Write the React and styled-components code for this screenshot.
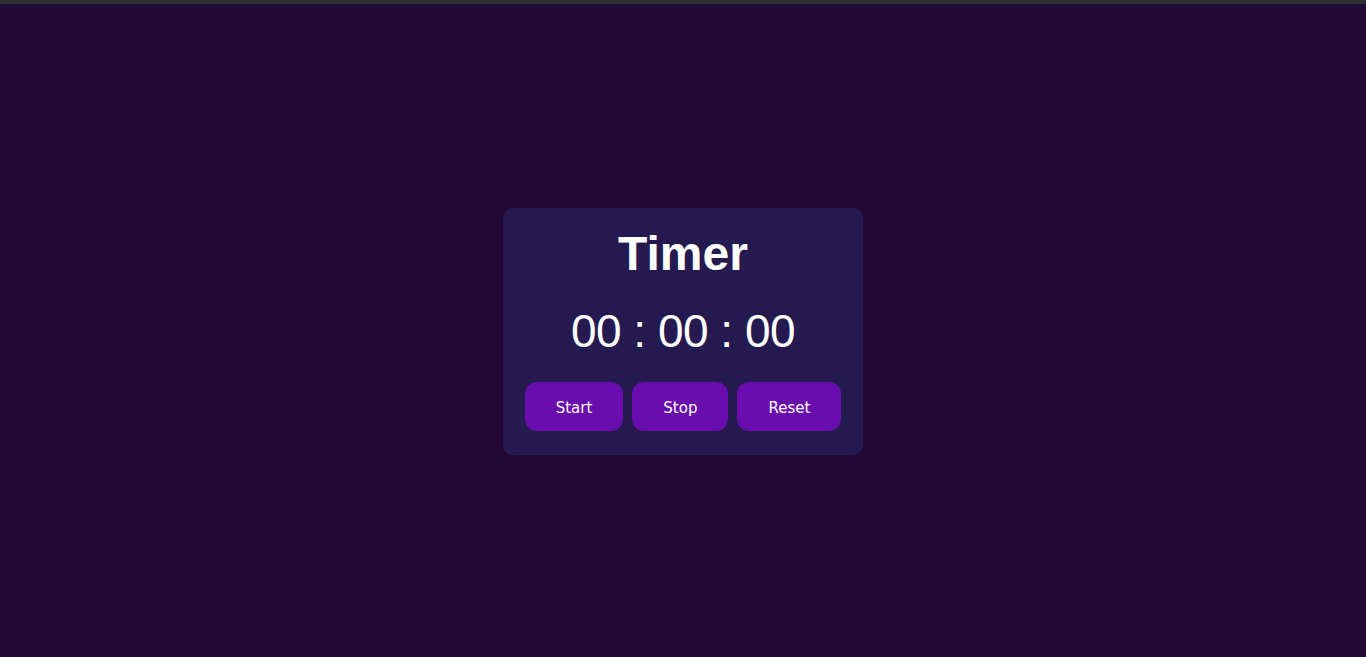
import React, { useState, useEffect } from "react";
import styled, { createGlobalStyle } from "styled-components";

const GlobalStyle = createGlobalStyle`
  html, body {
    margin: 0;
    padding: 0;
    background: #220834;
  }
  * { box-sizing: border-box; }
`;

const Page = styled.div`
  display: flex;
  flex-direction: column;
  min-height: 100vh;
`;

const TopBar = styled.div`
  height: 5px;
  background: #2f2e33;
  border-bottom: 1px solid #1c1c20;
`;

const Stage = styled.main`
  flex: 1;
  display: flex;
  justify-content: center;
  align-items: center;
`;

const Card = styled.div`
  display: flex;
  flex-direction: column;
  align-items: center;
  background: #241a50;
  border-radius: 10px;
  padding: 17px 22px 24px;
  color: #ffffff;
`;

const Title = styled.h1`
  margin: 0;
  font-family: "Liberation Sans", Arial, sans-serif;
  font-weight: 700;
  font-size: 48px;
  line-height: 58px;
`;

const Clock = styled.div`
  margin-top: 22px;
  font-family: "Liberation Sans", Arial, sans-serif;
  font-size: 46px;
  line-height: 53px;
  letter-spacing: -0.5px;
`;

const Controls = styled.div`
  display: flex;
  gap: 9px;
  margin-top: 24px;
`;

const Button = styled.button`
  height: 49px;
  padding: 3px 31px 0;
  border: none;
  border-radius: 12px;
  background: #6a0dad;
  color: #ffffff;
  font-family: "DejaVu Sans", Tahoma, sans-serif;
  font-size: 15px;
  cursor: pointer;
`;

const pad = (n) => String(n).padStart(2, "0");

function App() {
  const [seconds, setSeconds] = useState(0);
  const [running, setRunning] = useState(false);

  useEffect(() => {
    if (!running) return;
    const id = setInterval(() => setSeconds((s) => s + 1), 1000);
    return () => clearInterval(id);
  }, [running]);

  const h = Math.floor(seconds / 3600);
  const m = Math.floor((seconds % 3600) / 60);
  const s = seconds % 60;

  return (
    <Page>
      <GlobalStyle />
      <TopBar />
      <Stage>
        <Card>
          <Title>Timer</Title>
          <Clock>
            {pad(h)} : {pad(m)} : {pad(s)}
          </Clock>
          <Controls>
            <Button onClick={() => setRunning(true)}>Start</Button>
            <Button onClick={() => setRunning(false)}>Stop</Button>
            <Button onClick={() => { setRunning(false); setSeconds(0); }}>Reset</Button>
          </Controls>
        </Card>
      </Stage>
    </Page>
  );
}

export default App;
